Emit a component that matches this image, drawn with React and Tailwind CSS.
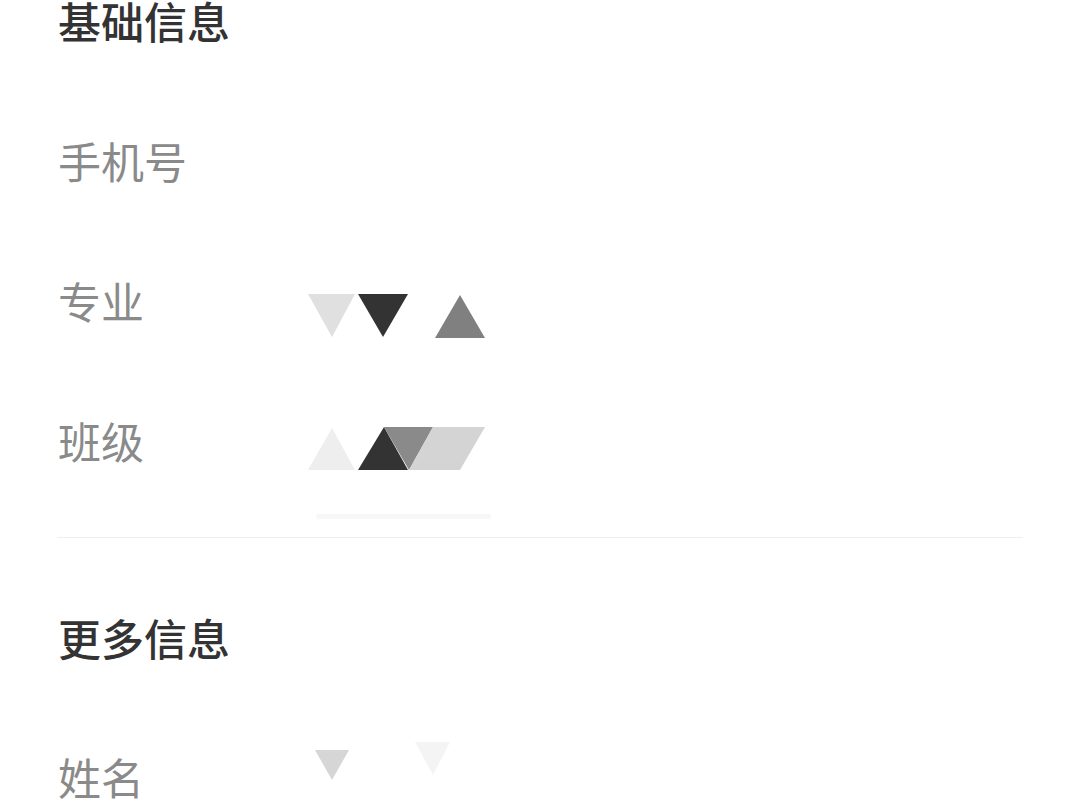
const font = { fontFamily: '"Noto Sans CJK SC", "Noto Sans", sans-serif' };

const Major = () => (
  <svg width="200" height="140" viewBox="0 0 200 140" className="block overflow-visible">
    <polygon points="0,64 47,64 24,107" fill="#e0e0e0" />
    <polygon points="50,64 100,64 75,107" fill="#333333" />
    <polygon points="152,65 127,108 177,108" fill="#808080" />
  </svg>
);

const ClassValue = () => (
  <svg width="200" height="140" viewBox="0 0 200 140" className="block overflow-visible">
    <polygon points="24,58 0,100 47,100" fill="#eeeeee" />
    <polygon points="76,57 50,100 100,100" fill="#333333" />
    <polygon points="76,57 125,57 101,100" fill="#8a8a8a" />
    <polygon points="125,57 177,57 152,100 101,100" fill="#d4d4d4" />
    <rect x="8" y="144" width="175" height="5" rx="2" fill="#f7f7f7" />
  </svg>
);

const NameValue = () => (
  <svg width="200" height="140" viewBox="0 0 200 140" className="block overflow-visible">
    <polygon points="7,44 41,44 24,74" fill="#d6d6d6" />
    <polygon points="107,36 142,36 125,69" fill="#f4f4f4" />
  </svg>
);

const Row = ({ label, children }) => (
  <div className="flex items-center h-[140px]">
    <div className="w-[250px] text-[43px] leading-[56px] text-[#8a8a8a]">{label}</div>
    <div className="h-[140px]">{children}</div>
  </div>
);

export default function App() {
  return (
    <div className="w-[1080px] h-[809px] bg-white overflow-hidden" style={font}>
      <div className="pl-[58px]">
        <div className="h-[40px] flex items-center text-[43px] text-[#333333] font-medium">基础信息</div>
        <div className="mt-[50px]">
          <Row label="手机号" />
          <Row label="专业"><Major /></Row>
          <Row label="班级"><ClassValue /></Row>
        </div>
      </div>
      <div className="mx-[57px] mt-[27px] border-t border-[#eeeeee]" />
      <div className="pl-[58px]">
        <div className="mt-[79px] h-[40px] flex items-center text-[43px] text-[#333333] font-medium">更多信息</div>
        <div className="mt-[49px]">
          <Row label="姓名"><NameValue /></Row>
        </div>
      </div>
    </div>
  );
}
